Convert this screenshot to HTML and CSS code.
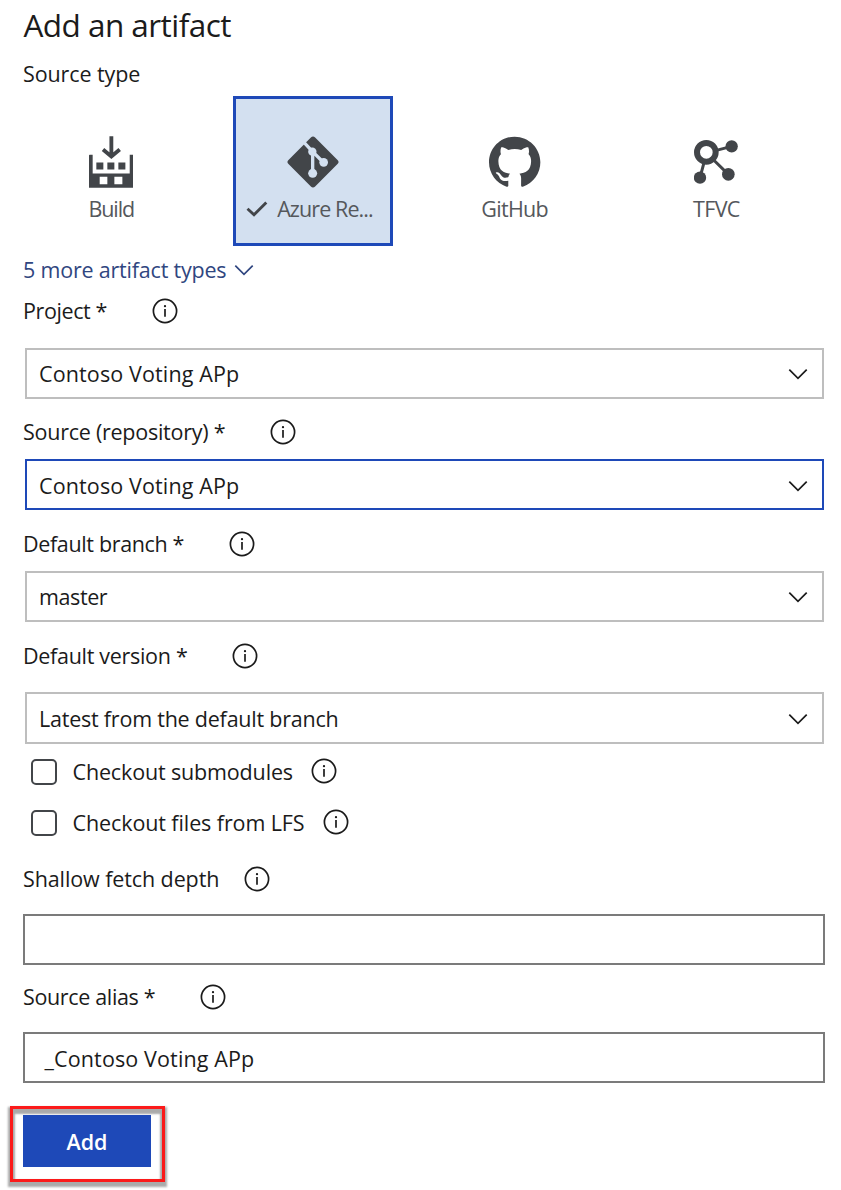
FILE: index.html
```html
<!DOCTYPE html>
<html lang="en">
<head>
<meta charset="utf-8">
<title>Add an artifact</title>
<link rel="stylesheet" href="styles.css">
</head>
<body>
<svg class="defs" width="0" height="0" aria-hidden="true">
  <symbol id="info" viewBox="0 0 26 26">
    <circle cx="13" cy="13" r="11.6" fill="none" stroke="currentColor" stroke-width="1.7"/>
    <path d="M13 11v7.8" stroke="currentColor" stroke-width="1.7"/>
    <circle cx="13" cy="8.2" r="1.15" fill="currentColor"/>
  </symbol>
  <symbol id="chevron" viewBox="0 0 20 12">
    <path d="M1.3 1.6 10 10.3l8.7-8.7" fill="none" stroke="currentColor" stroke-width="1.7"/>
  </symbol>
</svg>
<main class="panel">
  <h1 class="title">Add an artifact</h1>
  <div class="source-type">Source type</div>
  <div class="tiles">
    <div class="tile">
      <svg class="tile-icon" width="44.4" height="52" viewBox="0 0 133 155">
        <path d="M67 0v60M42 40l25 21 25-21" fill="none" stroke="currentColor" stroke-width="11.5"/>
        <path fill="currentColor" fill-rule="evenodd" d="M0 58q0-2 2-2h9v56h111V56h9q2 0 2 2v97H0zM22 79h21v21H22zM55 79h21v21H55zM88 79h21v21H88zM32 122h23v22H32zM76 122h24v22H76z"/>
      </svg>
      <div class="tile-label build">Build</div>
    </div>
    <div class="tile selected">
      <svg class="tile-icon" width="52" height="52" viewBox="0 0 156 156">
        <rect x="21.500" y="21.500" width="113" height="113" rx="9" fill="currentColor" transform="rotate(45 78 78)"/>
        <g stroke="#d3e0f0" stroke-width="10" fill="none">
          <path d="M46 14 76 46 108 78M77 46v66"/>
        </g>
        <g fill="#d3e0f0"><circle cx="76" cy="47" r="12.500"/><circle cx="110" cy="79" r="13"/><circle cx="77" cy="112" r="13.500"/></g>
      </svg>
      <div class="tile-label azure">
        <svg class="check" width="22" height="16" viewBox="0 0 22 16"><path d="M1.500 7.800 8 13.800 20.300 1.500" fill="none" stroke="currentColor" stroke-width="2.900"/></svg>
        <span>Azure Re...</span>
      </div>
    </div>
    <div class="tile">
      <svg class="tile-icon" width="52" height="52" viewBox="0 0 16.200 16.200">
        <path fill="currentColor" transform="translate(0 .2)" d="M8 0C3.580 0 0 3.580 0 8c0 3.540 2.290 6.530 5.470 7.590.4.070.55-.17.55-.38 0-.19-.01-.82-.01-1.490-2.010.37-2.530-.49-2.690-.94-.09-.23-.48-.94-.82-1.130-.28-.15-.68-.52-.01-.53.630-.01 1.080.58 1.230.82.720 1.210 1.870.87 2.330.66.070-.52.280-.87.510-1.070-1.780-.2-3.640-.89-3.640-3.950 0-.87.310-1.590.82-2.150-.08-.2-.36-1.020.08-2.120 0 0 .67-.21 2.200.82.640-.18 1.320-.27 2-.27s1.360.09 2 .27c1.530-1.040 2.200-.82 2.200-.82.440 1.100.160 1.920.080 2.120.510.560.820 1.270.820 2.150 0 3.070-1.870 3.750-3.650 3.950.290.250.540.730.540 1.480 0 1.070-.01 1.930-.01 2.200 0 .210.150.460.550.380A8.010 8.010 0 0 0 16 8c0-4.420-3.580-8-8-8z"/>
      </svg>
      <div class="tile-label github">GitHub</div>
    </div>
    <div class="tile">
      <svg class="tile-icon" width="44" height="52" viewBox="702 47 132 156">
        <circle cx="739" cy="96" r="28" fill="none" stroke="currentColor" stroke-width="18"/>
        <path d="M766 91l49-13M761 119l44 43M732 127l-12 45" stroke="currentColor" stroke-width="9"/>
        <g fill="currentColor"><circle cx="815" cy="78" r="18.500"/><circle cx="805" cy="162" r="19"/><circle cx="720" cy="172" r="18.500"/></g>
      </svg>
      <div class="tile-label tfvc">TFVC</div>
    </div>
  </div>
  <div class="more"><span>5 more artifact types</span><svg width="20" height="12"><use href="#chevron"/></svg></div>

  <div class="row project"><span class="label">Project *</span><svg class="info"><use href="#info"/></svg></div>
  <div class="select"><span class="contoso">Contoso Voting APp</span><svg width="20" height="12"><use href="#chevron"/></svg></div>
  <div class="row repository"><span class="label">Source (repository) *</span><svg class="info"><use href="#info"/></svg></div>
  <div class="select focused"><span class="contoso">Contoso Voting APp</span><svg width="20" height="12"><use href="#chevron"/></svg></div>
  <div class="row branch"><span class="label">Default branch *</span><svg class="info"><use href="#info"/></svg></div>
  <div class="select"><span class="master">master</span><svg width="20" height="12"><use href="#chevron"/></svg></div>
  <div class="row version"><span class="label">Default version *</span><svg class="info"><use href="#info"/></svg></div>
  <div class="select tall"><span>Latest from the default branch</span><svg width="20" height="12"><use href="#chevron"/></svg></div>

  <div class="row submodules"><span class="checkbox"></span><span class="label">Checkout submodules</span><svg class="info"><use href="#info"/></svg></div>
  <div class="row lfs"><span class="checkbox"></span><span class="label">Checkout files from LFS</span><svg class="info"><use href="#info"/></svg></div>

  <div class="row depth"><span class="label">Shallow fetch depth</span><svg class="info"><use href="#info"/></svg></div>
  <div class="input"></div>
  <div class="row alias"><span class="label">Source alias *</span><svg class="info"><use href="#info"/></svg></div>
  <div class="input"><span class="contoso">_Contoso Voting APp</span></div>

  <div class="callout"><button class="add">Add</button></div>
</main>
</body>
</html>
```
FILE: styles.css
```css
* { box-sizing: border-box; }
body {
  margin: 0;
  background: #fff;
  color: #1b1b1b;
  font: 21.5px/30px "Open Sans", "Noto Sans", sans-serif;
}
svg { display: block; flex: none; }
.defs { position: absolute; }
.panel { height: 1190px; overflow: hidden; }

.title {
  height: 50px;
  margin: 0;
  padding-left: 23.5px;
  font-size: 31.5px;
  font-weight: 400;
  line-height: 49px;
  letter-spacing: -.55px;
}
.source-type { height: 46px; padding: 9px 0 0 23px; letter-spacing: -.1px; }

.tiles { display: flex; gap: 41.7px; height: 150px; padding-left: 31.3px; }
.tile {
  display: flex;
  flex-direction: column;
  align-items: center;
  width: 160px;
  height: 150px;
  padding-top: 40px;
  color: #424549;
}
.tile.selected { padding-top: 37px; border: 3px solid #1e49b8; background: #d3e0f0; }
.tile-label { margin-top: 6px; color: #55585c; letter-spacing: -.7px; }
.tile-label.build { letter-spacing: -1.1px; }
.tile-label.azure { display: flex; align-items: center; gap: 9px; padding-right: 7px; letter-spacing: -.9px; }
.check { color: #424549; }

.more {
  display: flex;
  align-items: center;
  gap: 8px;
  height: 48px;
  padding-left: 23px;
  color: #304680;
  letter-spacing: -.2px;
}

.row { display: flex; align-items: center; height: 34px; padding-left: 23px; letter-spacing: -.2px; }
.row .info { width: 26px; height: 26px; }
.project { margin-bottom: 20px; }
.project .label { width: 128.5px; letter-spacing: -.4px; }
.repository { margin: 16px 0 10px; }
.repository .label { width: 247px; letter-spacing: -.25px; }
.branch { margin: 17px 0 10px; }
.branch .label { width: 205.500px; letter-spacing: -.35px; }
.version { margin: 17px 0 19px; }
.version .label { width: 208.500px; letter-spacing: -.3px; }
.submodules, .lfs { padding-left: 31px; }
.submodules { margin-top: 11px; }
.submodules .label { width: 238.500px; letter-spacing: -.15px; }
.lfs { margin-top: 17px; }
.lfs .label { width: 250.500px; letter-spacing: -.1px; }
.submodules .info { margin-bottom: 2px; }
.lfs .info { margin-bottom: 3px; }
.checkbox {
  width: 26px;
  height: 26px;
  margin-right: 15.500px;
  border: 2px solid #424549;
  border-radius: 5px;
}
.depth { margin: 22px 0 18px; }
.depth .label { width: 221px; letter-spacing: -.1px; }
.alias { margin: 15px 0 18px; }
.alias .label { width: 176.500px; letter-spacing: -.35px; }

.select {
  display: flex;
  align-items: center;
  justify-content: space-between;
  height: 51px;
  margin: 0 17px 0 25px;
  padding: 0 14px 0 12px;
  border: 2px solid #bebebe;
  letter-spacing: -.22px;
}
.select.focused { padding-top: 2px; border-color: #1e49b8; }
.select.tall { height: 52px; padding-top: 2px; }
.select .contoso, .input .contoso { letter-spacing: .13px; }
.select .master { letter-spacing: -.4px; }

.input {
  display: flex;
  align-items: center;
  height: 51px;
  margin: 0 16px 0 23px;
  padding: 2px 0 0 19.500px;
  border: 2px solid #7b7b7b;
}

.callout {
  width: 155px;
  height: 76px;
  margin: 23px 0 0 10px;
  padding: 6px 10px;
  border: 3px solid #fb1a1a;
  box-shadow: 0 3px 2px 2px #aaa, inset 0 3px 2px 2px #aaa;
}
.add {
  display: block;
  width: 128px;
  height: 52px;
  padding: 1px 0 0;
  border: 0;
  background: #1e49b8;
  color: #fff;
  font: 600 21.5px/51px "Open Sans", sans-serif;
}
```
